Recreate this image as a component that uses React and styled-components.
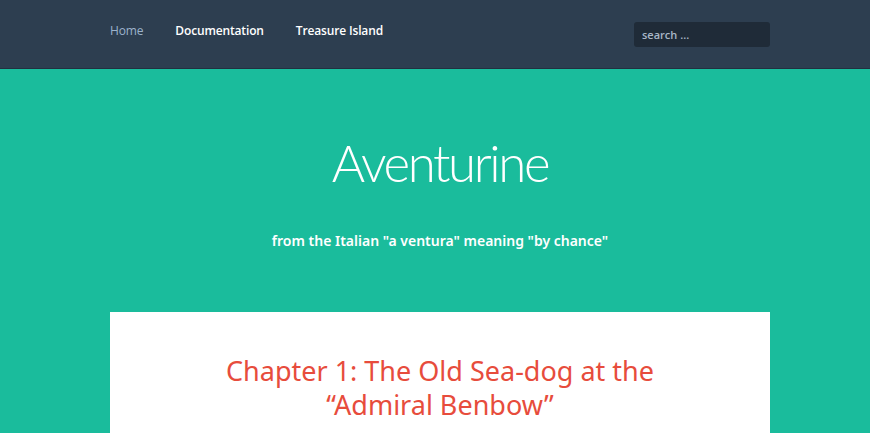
import React from "react";
import styled, { createGlobalStyle } from "styled-components";

const GlobalStyle = createGlobalStyle`
  html, body {
    margin: 0;
    padding: 0;
    background: #1abc9c;
  }
  * { box-sizing: border-box; }
`;

const NavBar = styled.nav`
  background: #2d3e50;
  height: 69px;
  padding-left: 10px;
  border-bottom: 1px solid #22303f;
`;

const Wrap = styled.div`
  width: 660px;
  margin: 0 auto;
`;

const NavInner = styled(Wrap)`
  display: flex;
  align-items: flex-start;
  justify-content: space-between;
  padding-top: 22px;
`;

const NavLinks = styled.ul`
  list-style: none;
  margin: 0;
  padding: 0;
  display: flex;
  gap: 32px;
`;

const NavLink = styled.li`
  font-family: "Open Sans", "Noto Sans", sans-serif;
  font-size: 12px;
  font-weight: ${({ active }) => (active ? 400 : 600)};
  color: ${({ active }) => (active ? "#9cb3cc" : "#ffffff")};
  line-height: 18px;
  letter-spacing: -0.15px;
  cursor: pointer;
`;

const Search = styled.input`
  width: 136px;
  height: 25px;
  border: none;
  border-radius: 3px;
  background: #1f2b38;
  padding: 0 8px;
  font-family: "Open Sans", "Noto Sans", sans-serif;
  font-size: 11px;
  font-weight: 600;
  color: #ffffff;
  outline: none;
  &::placeholder {
    color: #a8b7c7;
  }
`;

const Hero = styled.header`
  background: #1abc9c;
  text-align: center;
  padding: 64px 0 0 10px;
  height: 243px;
`;

const Title = styled.h1`
  margin: 0;
  font-family: "Lato", sans-serif;
  font-weight: 300;
  font-size: 51px;
  line-height: 60px;
  color: #ffffff;
  letter-spacing: -2.4px;
`;

const Tagline = styled.p`
  margin: 38px 0 0;
  font-family: "Noto Sans", sans-serif;
  font-weight: 600;
  font-size: 14px;
  color: #ffffff;
`;

const Body = styled.div`
  padding-left: 10px;
`;

const Card = styled(Wrap)`
  background: #ffffff;
  padding: 42px 30px 0;
  min-height: 140px;
`;

const ChapterTitle = styled.h2`
  margin: 0;
  text-align: center;
  font-family: "Noto Sans", sans-serif;
  font-weight: 400;
  font-size: 27px;
  line-height: 34px;
  color: #e74c3c;
`;

export default function App() {
  return (
    <>
      <GlobalStyle />
      <NavBar>
        <NavInner>
          <NavLinks>
            <NavLink active>Home</NavLink>
            <NavLink>Documentation</NavLink>
            <NavLink>Treasure Island</NavLink>
          </NavLinks>
          <Search placeholder="search ..." />
        </NavInner>
      </NavBar>
      <Hero>
        <Title>Aventurine</Title>
        <Tagline>from the Italian "a ventura" meaning "by chance"</Tagline>
      </Hero>
      <Body>
        <Card>
          <ChapterTitle>
            Chapter 1: The Old Sea-dog at the
            <br />
            “Admiral Benbow”
          </ChapterTitle>
        </Card>
      </Body>
    </>
  );
}
